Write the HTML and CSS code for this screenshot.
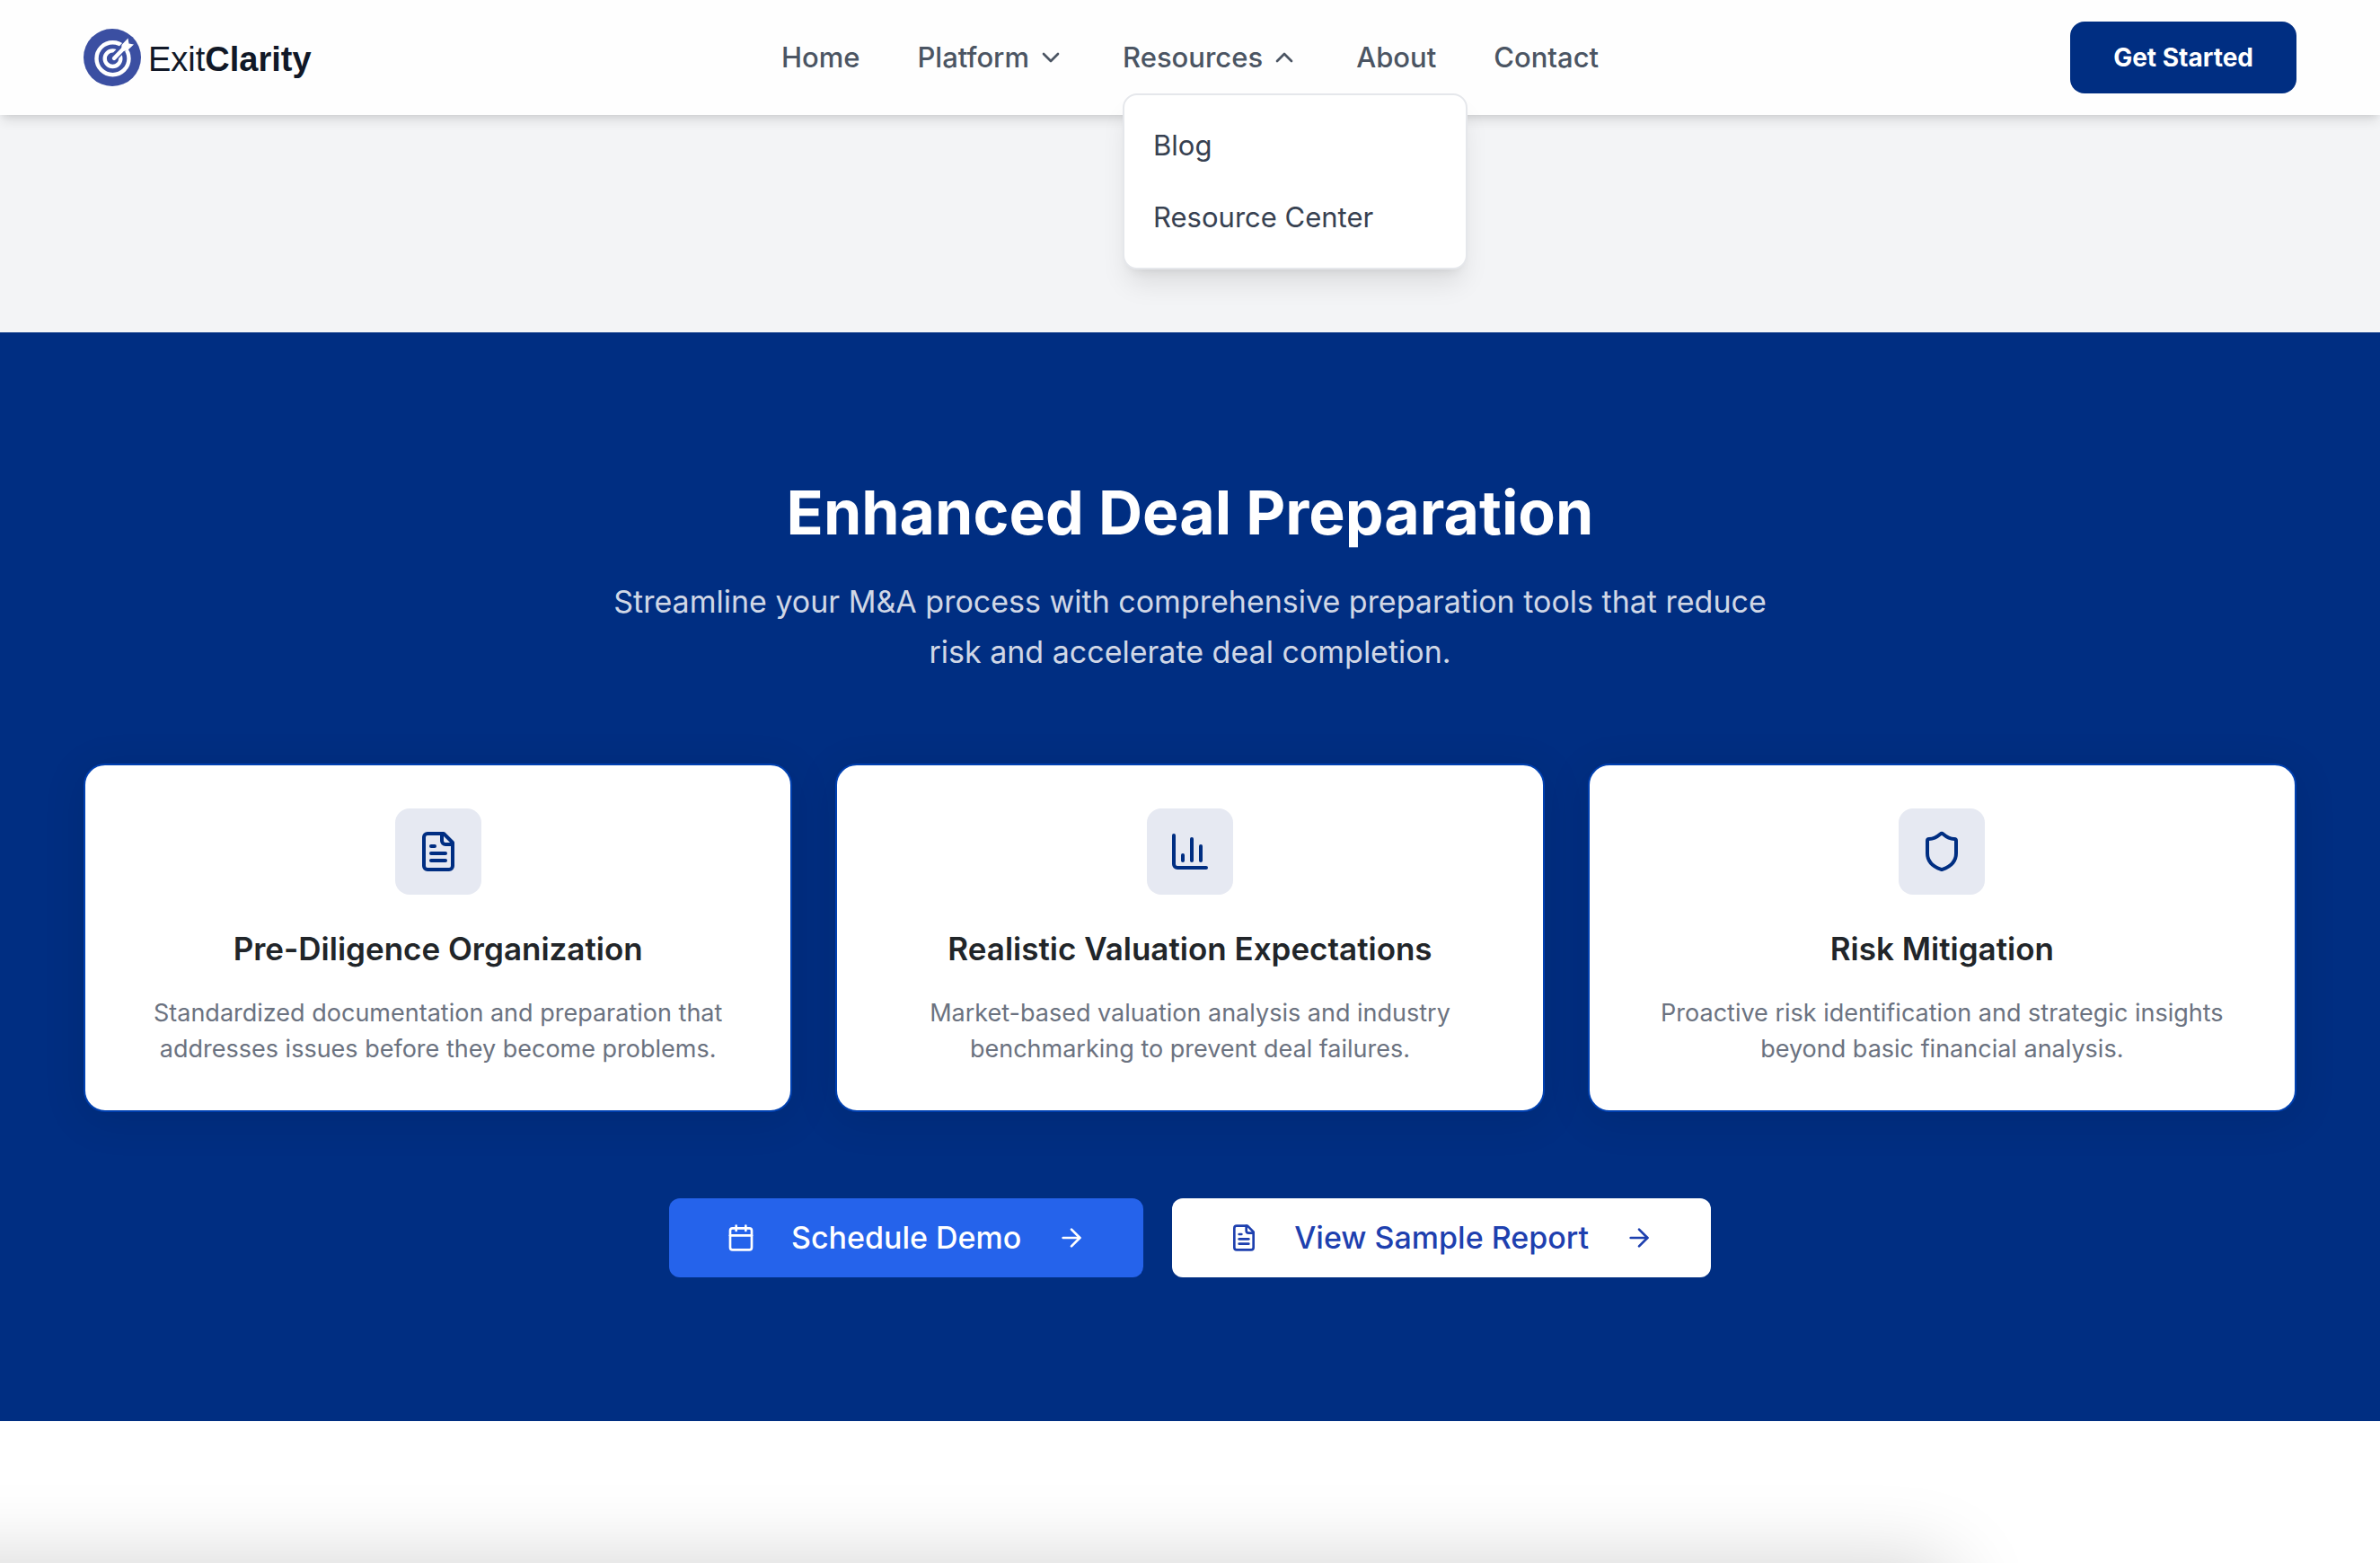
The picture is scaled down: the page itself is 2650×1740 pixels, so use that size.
FILE: index.html
```html
<!DOCTYPE html>
<html lang="en">
<head>
<meta charset="utf-8">
<meta name="viewport" content="width=device-width, initial-scale=1">
<title>ExitClarity</title>
<link rel="stylesheet" href="styles.css">
</head>
<body>
<header class="header">
  <div class="container header-row">
    <a class="logo" href="#">
      <svg class="logo-mark" viewBox="0 0 64 64" aria-hidden="true">
        <circle cx="32" cy="32" r="32" fill="#3b4fa2"/>
        <circle cx="32.500" cy="33.200" r="18" fill="none" stroke="#fff" stroke-width="4.400"/>
        <circle cx="32.500" cy="33.200" r="8.800" fill="none" stroke="#fff" stroke-width="4.400"/>
        <path d="M33 33 54 11" stroke="#3b4fa2" stroke-width="9"/>
        <path d="M34 33 48 18.500" stroke="#fff" stroke-width="4.400" stroke-linecap="round"/>
        <path d="M42.500 18 49.500 10.500l1 6 5.500 1-7.500 7-6.500.5z" fill="#fff"/>
      </svg>
      <span class="logo-text">Exit<b>Clarity</b></span>
    </a>
    <nav aria-label="Main">
      <ul class="nav-list">
        <li><a class="nav-link" href="#">Home</a></li>
        <li><button class="nav-link" type="button" aria-expanded="false">Platform
          <svg class="icon" viewBox="0 0 24 24" aria-hidden="true"><path d="m6 9 6 6 6-6"/></svg></button></li>
        <li class="has-menu"><button class="nav-link" type="button" aria-expanded="true">Resources
          <svg class="icon" viewBox="0 0 24 24" aria-hidden="true"><path d="m18 15-6-6-6 6"/></svg></button>
          <div class="menu">
            <a class="menu-item" href="#">Blog</a>
            <a class="menu-item" href="#">Resource Center</a>
          </div>
        </li>
        <li><a class="nav-link" href="#">About</a></li>
        <li><a class="nav-link" href="#">Contact</a></li>
      </ul>
    </nav>
    <button class="get-started" type="button">Get Started</button>
  </div>
</header>
<main>
  <div class="band"></div>
  <section class="deal">
    <div class="container">
      <h2 class="title">Enhanced Deal Preparation</h2>
      <p class="lead">Streamline your M&amp;A process with comprehensive preparation tools that reduce risk and accelerate deal completion.</p>
      <div class="cards">
        <article class="card">
          <div class="badge"><svg class="icon" viewBox="0 0 24 24" aria-hidden="true"><path d="M15 2H6a2 2 0 0 0-2 2v16a2 2 0 0 0 2 2h12a2 2 0 0 0 2-2V7Z"/><path d="M14 2v4a2 2 0 0 0 2 2h4"/><path d="M10 9H8"/><path d="M16 13H8"/><path d="M16 17H8"/></svg></div>
          <h3 class="card-title">Pre-Diligence Organization</h3>
          <p class="card-text">Standardized documentation and preparation that addresses issues before they become problems.</p>
        </article>
        <article class="card">
          <div class="badge"><svg class="icon" viewBox="0 0 24 24" aria-hidden="true"><path d="M3 3v16a2 2 0 0 0 2 2h16"/><path d="M18 17V9"/><path d="M13 17V5"/><path d="M8 17v-3"/></svg></div>
          <h3 class="card-title">Realistic Valuation Expectations</h3>
          <p class="card-text">Market-based valuation analysis and industry benchmarking to prevent deal failures.</p>
        </article>
        <article class="card">
          <div class="badge"><svg class="icon" viewBox="0 0 24 24" aria-hidden="true"><path d="M20 13c0 5-3.500 7.500-7.660 8.950a1 1 0 0 1-.67-.01C7.500 20.500 4 18 4 13V6a1 1 0 0 1 1-1c2 0 4.500-1.200 6.240-2.720a1.170 1.170 0 0 1 1.520 0C14.510 3.810 17 5 19 5a1 1 0 0 1 1 1z"/></svg></div>
          <h3 class="card-title">Risk Mitigation</h3>
          <p class="card-text">Proactive risk identification and strategic insights beyond basic financial analysis.</p>
        </article>
      </div>
      <div class="actions">
        <button class="action action-primary" type="button">
          <svg class="icon" viewBox="0 0 24 24" aria-hidden="true"><path d="M8 2v4"/><path d="M16 2v4"/><rect width="18" height="18" x="3" y="4" rx="2"/><path d="M3 10h18"/></svg>
          Schedule Demo
          <svg class="icon" viewBox="0 0 24 24" aria-hidden="true"><path d="M5 12h14"/><path d="m12 5 7 7-7 7"/></svg>
        </button>
        <button class="action action-light" type="button">
          <svg class="icon" viewBox="0 0 24 24" aria-hidden="true"><path d="M15 2H6a2 2 0 0 0-2 2v16a2 2 0 0 0 2 2h12a2 2 0 0 0 2-2V7Z"/><path d="M14 2v4a2 2 0 0 0 2 2h4"/><path d="M10 9H8"/><path d="M16 13H8"/><path d="M16 17H8"/></svg>
          View Sample Report
          <svg class="icon" viewBox="0 0 24 24" aria-hidden="true"><path d="M5 12h14"/><path d="m12 5 7 7-7 7"/></svg>
        </button>
      </div>
    </div>
  </section>
  <section class="next"></section>
</main>
</body>
</html>
```
FILE: styles.css
```css
* { box-sizing: border-box; margin: 0; padding: 0; }

body {
  display: flex;
  flex-direction: column;
  min-height: 100vh;
  background: #fff;
  font-family: Inter, "Liberation Sans", sans-serif;
  font-size: 31px;
  line-height: 48px;
}

button { border: 0; background: none; font: inherit; cursor: pointer; }
a { color: inherit; text-decoration: none; }

.container { width: 100%; max-width: 2560px; margin: 0 auto; padding: 0 48px; }

.icon {
  width: 32px;
  height: 32px;
  flex: none;
  fill: none;
  stroke: currentColor;
  stroke-width: 2;
  stroke-linecap: round;
  stroke-linejoin: round;
}

/* Header */
.header {
  position: relative;
  z-index: 10;
  padding: 24px 0;
  background: #fefefe;
  box-shadow: 0 8px 12px -2px rgba(0, 0, 0, .1), 0 4px 8px -4px rgba(0, 0, 0, .1);
}
.header-row { display: grid; grid-template-columns: 1fr auto 1fr; align-items: center; }

.logo { display: flex; align-items: center; gap: 8px; color: #111827; }
.logo-mark { width: 64px; height: 64px; }
.logo-text { padding-top: 4px; font-family: "Liberation Sans", Arial, sans-serif; font-size: 38px; }

.nav-list { display: flex; gap: 64px; list-style: none; }
.nav-link { display: flex; align-items: center; gap: 8px; color: #4b5563; font-weight: 500; }
.has-menu { position: relative; }
.menu {
  position: absolute;
  top: calc(100% + 16px);
  left: 0;
  width: 384px;
  padding: 16px 0;
  background: #fff;
  border: 2px solid #e5e7eb;
  border-radius: 16px;
  box-shadow: 0 20px 30px -6px rgba(0, 0, 0, .1), 0 8px 12px -8px rgba(0, 0, 0, .1);
}
.menu-item { display: block; padding: 16px 32px; color: #374151; }

.get-started {
  justify-self: end;
  padding: 20px 48px;
  background: #002e82;
  border-radius: 16px;
  color: #fff;
  font-size: 28px;
  font-weight: 700;
  line-height: 40px;
}

/* Content */
main { display: flex; flex: 1; flex-direction: column; }
.band { height: 242px; background: #f3f4f6; }

.deal { padding: 160px 0; background: #002e82; text-align: center; }
.title { color: #fff; font-size: 68px; font-weight: 700; line-height: 80px; }
.lead { max-width: 1344px; margin: 32px auto 96px; color: #d0d7e6; font-size: 34px; line-height: 56px; }

.cards { display: grid; grid-template-columns: repeat(3, 1fr); gap: 48px; }
.card {
  padding: 48px;
  background: #fff;
  border: 2px solid #0040b0;
  border-radius: 24px;
  box-shadow: 0 8px 48px rgba(0, 0, 0, .1);
}
.badge {
  display: grid;
  place-items: center;
  width: 96px;
  height: 96px;
  margin: 0 auto 32px;
  background: #e6e9f2;
  border-radius: 16px;
  color: #002e82;
}
.badge .icon { width: 48px; height: 48px; }
.card-title { margin-bottom: 24px; color: #212529; font-size: 35px; font-weight: 600; line-height: 56px; }
.card-text { color: #6b7280; font-size: 27px; line-height: 40px; }

.actions { display: flex; flex-wrap: wrap; justify-content: center; gap: 32px; margin-top: 96px; }
.action {
  display: flex;
  align-items: center;
  gap: 40px;
  padding: 16px 64px;
  border-radius: 12px;
  font-size: 34px;
  font-weight: 500;
  line-height: 56px;
}
.action-primary { background: #2563eb; color: #fff; }
.action-light { background: #fff; color: #1e40af; }

/* Start of the following section, with the shade that rises from the bottom edge */
.next { position: relative; flex: 1; min-height: 158px; overflow: hidden; }
.next::after {
  content: "";
  position: absolute;
  top: 100%;
  left: -10%;
  right: 18%;
  height: 200px;
  border-radius: 24px;
  box-shadow: 0 0 90px rgba(0, 0, 0, .18);
}
```
